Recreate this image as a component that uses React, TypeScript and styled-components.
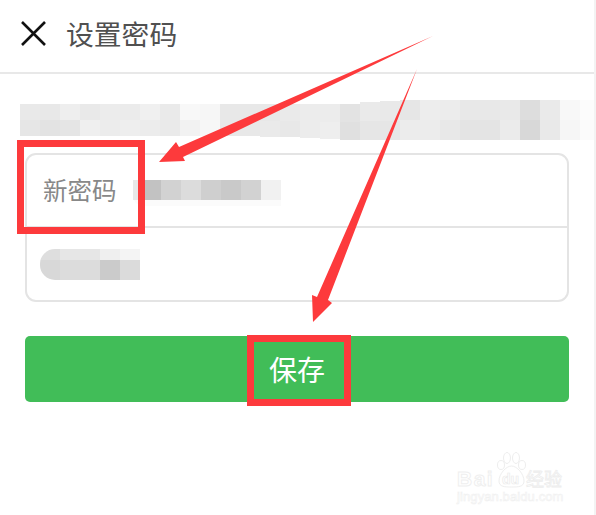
import styled, { createGlobalStyle } from "styled-components"

const GlobalStyle = createGlobalStyle`
  html, body {
    margin: 0;
    padding: 0;
    background: #fff;
    overflow: hidden;
  }
  * {
    box-sizing: border-box;
  }
`

const Page = styled.div`
  position: relative;
  width: 596px;
  height: 515px;
  overflow: hidden;
  background: #fff;
  border-right: 2px solid #f3f3f3;
  font-family: "Noto Sans CJK SC", "Liberation Sans", sans-serif;
`

const Header = styled.header`
  display: flex;
  align-items: center;
  gap: 20px;
  height: 74px;
  padding: 0 0 5px 21px;
  border-bottom: 2px solid #e8e8e8;
`

const Title = styled.h1`
  margin: 0;
  font-size: 27.8px;
  line-height: 1;
  font-weight: 400;
  color: #505050;
`

const Notice = styled.div`
  display: flex;
  align-items: flex-start;
  height: 79px;
  padding: 26px 0 0 20px;
`

const NoticeColumn = styled.div<{ $top: number; $height: number }>`
  display: flex;
  flex-direction: column;
  width: 20px;
  flex: none;
  margin-top: ${(p) => p.$top}px;
  height: ${(p) => p.$height}px;
`

const Cell = styled.div<{ $color: string }>`
  flex: 1;
  background: ${(p) => p.$color};
`

const Card = styled.section`
  margin: 0 25px;
  width: 544px;
  height: 149px;
  border: 2px solid #e4e4e4;
  border-radius: 11px;
  background: #fff;
`

const FieldRow = styled.div<{ $divider?: boolean }>`
  display: flex;
  align-items: center;
  height: 73px;
  padding-left: 16px;
  border-bottom: ${(p) => (p.$divider ? "2px solid #e4e4e4" : "none")};
`

const FieldLabel = styled.span`
  flex: none;
  width: 73px;
  font-size: 24.5px;
  line-height: 1;
  white-space: nowrap;
  color: #888;
`

const BlurredValue = styled.div`
  display: flex;
  height: 20px;
  margin: 0 0 1px 17px;
  border-radius: 10px 0 0 10px;
  box-shadow: 0 6px 0 #fbfbfb;
`

const BlurredStack = styled.div`
  display: flex;
  flex-direction: column;
  height: 31px;
  margin-left: -3px;
  width: 100px;
  border-radius: 15px 0 0 15px;
  overflow: hidden;
`

const BlurredLine = styled.div<{ $grow: number }>`
  display: flex;
  flex: ${(p) => p.$grow};
`

const BlurCell = styled.div<{ $color: string; $width?: number }>`
  width: ${(p) => p.$width ?? 20}px;
  flex: none;
  background: ${(p) => p.$color};
`

const SaveButton = styled.button`
  display: flex;
  align-items: center;
  justify-content: center;
  width: 544px;
  height: 66px;
  margin: 34px 25px 0;
  padding: 0;
  border: none;
  border-radius: 5px;
  background: #41bd58;
  color: #fff;
  font-family: inherit;
  font-size: 28px;
  line-height: 1;
`

const Overlay = styled.svg`
  position: absolute;
  left: 0;
  top: 0;
  pointer-events: none;
`

const Highlight = styled.div<{ $x: number; $y: number; $w: number; $h: number }>`
  position: absolute;
  left: ${(p) => p.$x}px;
  top: ${(p) => p.$y}px;
  width: ${(p) => p.$w}px;
  height: ${(p) => p.$h}px;
  border: 7px solid #fd3a3c;
`

const Watermark = styled.div`
  position: absolute;
  left: 457px;
  top: 452px;
  width: 110px;
  color: #fff;
  font-family: "Liberation Sans", "Noto Sans CJK SC", sans-serif;
`

const WatermarkTop = styled.div`
  display: flex;
  align-items: flex-end;
  height: 36px;
`

const WatermarkBrand = styled.span`
  width: 40px;
  font-size: 21px;
  line-height: 19px;
  font-weight: 700;
  letter-spacing: 1.5px;
  -webkit-text-stroke: 1px #efefef;
`

const PawMark = styled.div`
  position: relative;
  flex: none;
  width: 29px;
  height: 36px;
`

const PawText = styled.span`
  position: absolute;
  left: 5px;
  bottom: 1px;
  font-size: 14px;
  line-height: 16px;
  font-weight: 700;
  -webkit-text-stroke: 0.7px #ebebeb;
`

const WatermarkBadge = styled.span`
  font-family: "Noto Sans CJK SC", sans-serif;
  font-size: 18px;
  line-height: 20px;
  white-space: nowrap;
  -webkit-text-stroke: 0.8px #ededed;
`

const WatermarkUrl = styled.div`
  margin-top: 2px;
  font-size: 13px;
  line-height: 13px;
  letter-spacing: 0.1px;
  white-space: nowrap;
  -webkit-text-stroke: 0.6px #f0f0f0;
`

const topRow = [
  "#e9e9e9", "#e8e8e8", "#eeeeee", "#e9e9e9", "#ececec", "#ebebeb", "#f0f0f0", "#eaeaea",
  "#f8f8f8", "#f6f6f6", "#e8e8e8", "#e8e8e8", "#e8e8e8", "#eaeaea", "#ececec", "#ececec",
  "#e3e3e3", "#eaeaea", "#e9e9e9", "#e6e6e6", "#ededed", "#ececec", "#e8e8e8", "#e8e8e8",
  "#e9e9e9", "#dddddd", "#eaeaea", "#f8f8f8", "#fcfcfc",
]
const bottomRow = [
  "#e6e6e6", "#e3e3e3", "#e5e5e5", "#efefef", "#ececec", "#eeeeee", "#ececec", "#eaeaea",
  "#f2f2f2", "#f7f7f7", "#e8e8e8", "#e8e8e8", "#eaeaea", "#e8e8e8", "#ececec", "#eeeeee",
  "#e0e0e0", "#e6e6e6", "#e6e6e6", "#ececec", "#ececec", "#e8e8e8", "#e4e4e4", "#e4e4e4",
  "#ebebeb", "#d8d8d8", "#e9e9e9", "#f6f6f6", "#fbfbfb",
]

// the strip is a slightly tilted photo: its edges drift across the width
const stripTop = (i: number) => (i < 16 ? 4 : i > 18 ? 0 : 20 - i - (i === 16 ? 0 : 1))
const stripBottom = (i: number) => (i < 12 ? 36 : i < 14 ? 37 : i < 15 ? 38 : i < 16 ? 39 : 40)

const passwordCells = ["#c2c2c2", "#d2d2d2", "#dcdcdc", "#cfcfcf", "#c9c9c9", "#d2d2d2", "#f1f1f1"]
const confirmTop = ["#dedede", "#e6e6e6", "#e6e6e6", "#efefef", "#f4f4f4"]
const confirmBottom = ["#d8d8d8", "#dcdcdc", "#dcdcdc", "#cbcbcb", "#dbdbdb"]

export default function App() {
  return (
    <Page>
      <GlobalStyle />
      <Header>
        <svg width="25" height="25" viewBox="0 0 25 25" fill="none" stroke="#111" strokeWidth="2.6">
          <path d="M1 1 24 24M24 1 1 24" />
        </svg>
        <Title>设置密码</Title>
      </Header>
      <Notice>
        {topRow.map((color, i) => (
          <NoticeColumn key={i} $top={stripTop(i)} $height={stripBottom(i) - stripTop(i)}>
            <Cell $color={color} />
            <Cell $color={bottomRow[i]} />
          </NoticeColumn>
        ))}
      </Notice>
      <Card>
        <FieldRow $divider>
          <FieldLabel>新密码</FieldLabel>
          <BlurredValue>
            <BlurCell $color="#e8e8e8" $width={8} />
            {passwordCells.map((c, i) => (
              <BlurCell key={i} $color={c} />
            ))}
          </BlurredValue>
        </FieldRow>
        <FieldRow>
          <BlurredStack>
            <BlurredLine $grow={11}>
              {confirmTop.map((c, i) => (
                <BlurCell key={i} $color={c} />
              ))}
            </BlurredLine>
            <BlurredLine $grow={20}>
              {confirmBottom.map((c, i) => (
                <BlurCell key={i} $color={c} />
              ))}
            </BlurredLine>
          </BlurredStack>
        </FieldRow>
      </Card>
      <SaveButton>保存</SaveButton>

      <Highlight $x={17} $y={140} $w={128} $h={94} />
      <Highlight $x={247} $y={335} $w={104} $h={71} />
      <Overlay width="596" height="515" viewBox="0 0 596 515">
        <path fill="#fd3a3c" d="M433 36 179 147 176 142 159 162 185 161 183 157Z" />
        <path fill="#fd3a3c" d="M417 69 328 300 332 303 313 322 312 295 317 297Z" />
      </Overlay>

      <Watermark>
        <WatermarkTop>
          <WatermarkBrand>Bai</WatermarkBrand>
          <PawMark>
            <svg width="29" height="36" viewBox="0 0 29 36" fill="#fff" stroke="#eeeeee" strokeWidth="1">
              <ellipse cx="4" cy="13" rx="3.5" ry="4.5" />
              <ellipse cx="10" cy="6" rx="3.5" ry="5.5" />
              <ellipse cx="19" cy="6" rx="3.5" ry="5.5" />
              <ellipse cx="25" cy="13" rx="3.5" ry="4.5" />
              <path d="M2 29c0-7 7-15 12.500-15S27 22 27 29c0 6-6 6-12.500 6S2 35 2 29Z" />
            </svg>
            <PawText>du</PawText>
          </PawMark>
          <WatermarkBadge>经验</WatermarkBadge>
        </WatermarkTop>
        <WatermarkUrl>jingyan.baidu.com</WatermarkUrl>
      </Watermark>
    </Page>
  )
}
